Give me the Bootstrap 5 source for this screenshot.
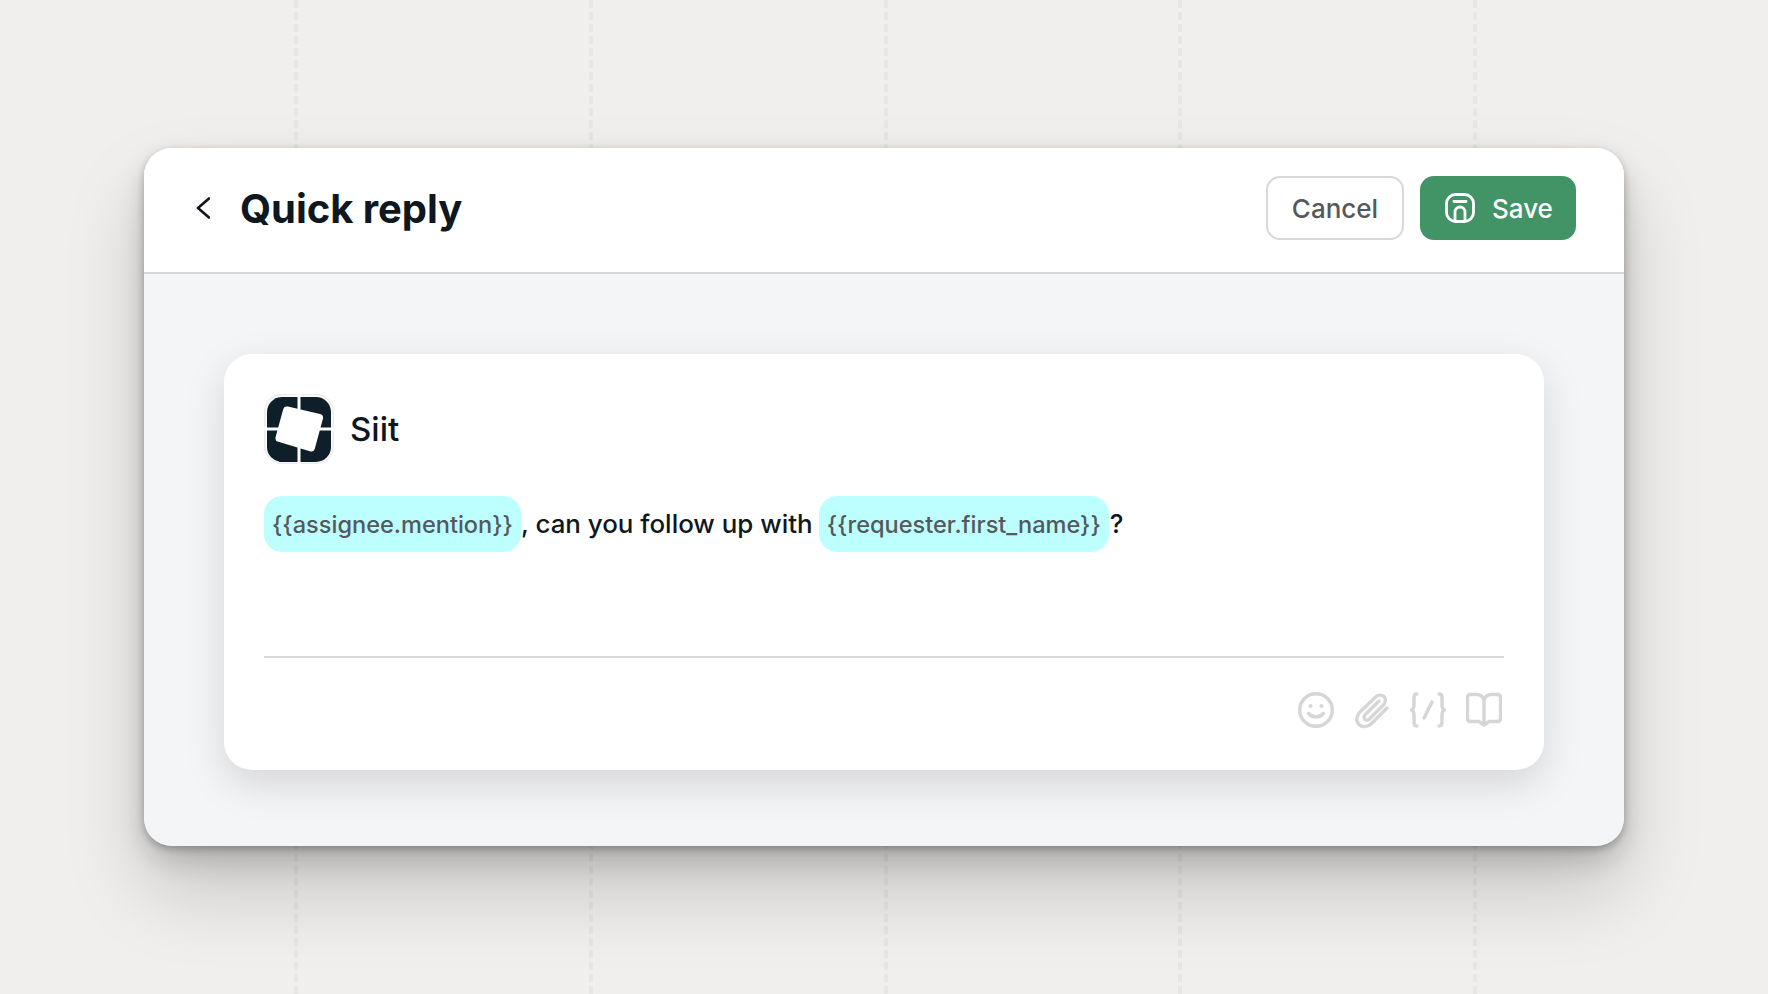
<!DOCTYPE html>
<html lang="en">

<head>
    <meta charset="UTF-8">
    <meta name="viewport" content="width=device-width, initial-scale=1.0">
    <title>Quick reply</title>
    <link href="https://cdn.jsdelivr.net/npm/bootstrap@5.3.0/dist/css/bootstrap.min.css" rel="stylesheet">
    <style>
        body {
            background-color: #f0efed;
            height: 994px;
            overflow: hidden;
            font-family: "Inter", "Liberation Sans", sans-serif;
            color: #0f1720;
            padding-top: 148px;
        }

        /* dashed guide lines behind the window */
        .guide-lines {
            position: fixed;
            top: 0;
            bottom: 0;
            left: 294px;
            width: 1183px;
            display: flex;
            justify-content: space-between;
        }

        .guide-lines span {
            border-left: 4px dashed #e6e6e5;
        }

        .window-shadow {
            position: relative;
            width: 1480px;
            margin-left: 144px;
            border-radius: 28px;
            box-shadow: 0 3px 8px rgba(0, 0, 0, 0.26), 0 14px 30px rgba(0, 0, 0, 0.16), 0 44px 80px rgba(0, 0, 0, 0.18);
        }

        .reply-window {
            height: 698px;
            background-color: #f4f5f7;
            border-radius: 28px;
            overflow: hidden;
        }

        .reply-header {
            height: 126px;
            background: #fff;
            border-bottom: 2px solid #d8d8d8;
            padding: 28px 48px 32px 52px;
        }

        .back-btn {
            width: 14px;
            height: 22px;
            margin-right: 30px;
            color: #0f1720;
        }

        .reply-title {
            font-size: 40px;
            font-weight: 700;
            letter-spacing: -0.05px;
            margin: 2px 0 0;
        }

        .btn-cancel,
        .btn-save {
            height: 64px;
            border-radius: 14px;
            font-size: 26px;
            font-weight: 500;
            display: flex;
            align-items: center;
        }

        .btn-cancel {
            width: 138px;
            justify-content: center;
            background: #fff;
            border: 2px solid #d8d8d8;
            color: #55585c;
        }

        .btn-save {
            width: 156px;
            padding: 0 0 0 25px;
            gap: 17px;
            background: #429466;
            border: 0;
            color: #fff;
        }

        .reply-body {
            padding: 80px;
        }

        .composer {
            height: 416px;
            background: #fff;
            border-radius: 28px;
            padding: 40px;
            box-shadow: 0 14px 40px rgba(0, 0, 0, 0.13);
        }

        .org-name {
            font-size: 33px;
            font-weight: 500;
            margin-top: 2px;
        }

        .message-line {
            height: 56px;
            margin-top: 32px;
            font-size: 25.9px;
            font-weight: 500;
        }

        .token {
            height: 56px;
            display: inline-flex;
            align-items: center;
            padding: 1px 8px 0;
            border-radius: 18px;
            background: #bdffff;
            color: #55585c;
            font-size: 23.55px;
            font-weight: 450;
        }

        .token-gap {
            margin-right: 6px;
        }

        .after-token {
            margin-left: 1px;
        }

        .composer-rule {
            margin-top: 104px;
            border-top: 2px solid #d8d8d8;
        }

        .tool-row {
            margin-top: 33px;
            margin-right: 2px;
            gap: 20px;
            color: #d6d6d6;
        }
    </style>
</head>

<body>
    <div class="guide-lines"><span></span><span></span><span></span><span></span><span></span></div>

    <div class="window-shadow">
        <div class="reply-window">
            <div class="reply-header d-flex align-items-center justify-content-between">
                <div class="d-flex align-items-center">
                    <svg class="back-btn" viewBox="0 0 14 22" fill="none" stroke="currentColor" stroke-width="2.6" stroke-linecap="round" stroke-linejoin="round">
                        <path d="M13 1.5 2 11l11 9.500" />
                    </svg>
                    <h1 class="reply-title">Quick reply</h1>
                </div>
                <div class="d-flex gap-3">
                    <button type="button" class="btn btn-cancel">Cancel</button>
                    <button type="button" class="btn btn-save">
                        <svg width="30" height="30" viewBox="0 0 30 30" fill="none" stroke="#fff" stroke-width="2.800" stroke-linecap="round">
                            <rect x="1.500" y="1.500" width="27" height="27" rx="9" />
                            <path d="M9 8.500h12" />
                            <path d="M10 28v-9a5 5 0 0 1 10 0v9" />
                        </svg>
                        Save
                    </button>
                </div>
            </div>

            <div class="reply-body">
                <div class="composer">
                    <div class="d-flex align-items-center gap-3">
                        <svg width="70" height="70" viewBox="0 0 70 70">
                            <rect x="0.750" y="0.750" width="68.500" height="68.500" rx="17" fill="#fff" stroke="#ececec" stroke-width="1.500" />
                            <rect x="3" y="3" width="64" height="65" rx="15" fill="#0f1f29" />
                            <polygon points="23,16.500 55,24 47,53.500 15.500,44" fill="#fff" stroke="#fff" stroke-width="8" stroke-linejoin="round" />
                            <path d="M35 0v18M35 52v18M0 35h18M52 35h18" stroke="#fff" stroke-width="3" />
                        </svg>
                        <span class="org-name">Siit</span>
                    </div>
                    <div class="message-line d-flex align-items-center">
                        <span class="token">{{assignee.mention}}</span>
                        <span class="token-gap">, can you follow up with</span>
                        <span class="token">{{requester.first_name}}</span>
                        <span class="after-token">?</span>
                    </div>
                    <div class="composer-rule"></div>
                    <div class="tool-row d-flex justify-content-end">
                        <svg width="36" height="38" viewBox="0 0 36 38" fill="none" stroke="currentColor" stroke-width="3.400" stroke-linecap="round">
                            <circle cx="18" cy="19" r="16.300" />
                            <circle cx="12.500" cy="15" r="2" fill="currentColor" stroke="none" />
                            <circle cx="23.500" cy="15" r="2" fill="currentColor" stroke="none" />
                            <path d="M10.500 22.500c4 4.500 11 4.500 15 0" />
                        </svg>
                        <svg width="36" height="38" viewBox="0 0 36 38" fill="none" stroke="currentColor" stroke-width="3.400" stroke-linecap="round" stroke-linejoin="round">
                            <path d="M33 17 17.500 32.500c-4 4-9.500 4-12.500 1s-3-8.500 1-12.500L21 6.500c3-3 7-3 9-1s2 6-1 9L15.500 28c-1.500 1.500-3.500 1.500-4.700.3s-1.200-3.200.3-4.700L25 10" />
                        </svg>
                        <svg width="36" height="38" viewBox="0 0 36 38" fill="none" stroke="currentColor" stroke-width="3.400" stroke-linecap="round" stroke-linejoin="round">
                            <path d="M7 3C4.500 3 4 4.500 4 6.500V14c0 3-1 4.500-2.500 5C3 19.500 4 21 4 24v7.500C4 33.500 4.500 35 7 35" />
                            <path d="M29 3c2.500 0 3 1.500 3 3.500V14c0 3 1 4.500 2.500 5-1.500.5-2.500 2-2.500 5v7.500c0 2-.5 3.500-3 3.500" />
                            <path d="M22 11 14 27" />
                        </svg>
                        <svg width="36" height="38" viewBox="0 0 36 38" fill="none" stroke="currentColor" stroke-width="3.400" stroke-linecap="round" stroke-linejoin="round">
                            <path d="M18 9c-1-3-3-5.500-7-5.500H4.500c-1.800 0-3 1.200-3 3v21c0 1.800 1.200 3 3 3H13l5 3.500 5-3.500h8.500c1.800 0 3-1.200 3-3v-21c0-1.800-1.200-3-3-3H25c-4 0-6 2.500-7 5.500Zm0 0v24" />
                        </svg>
                    </div>
                </div>
            </div>
        </div>
    </div>

    <script src="https://cdn.jsdelivr.net/npm/bootstrap@5.3.0/dist/js/bootstrap.bundle.min.js"></script>
</body>

</html>
